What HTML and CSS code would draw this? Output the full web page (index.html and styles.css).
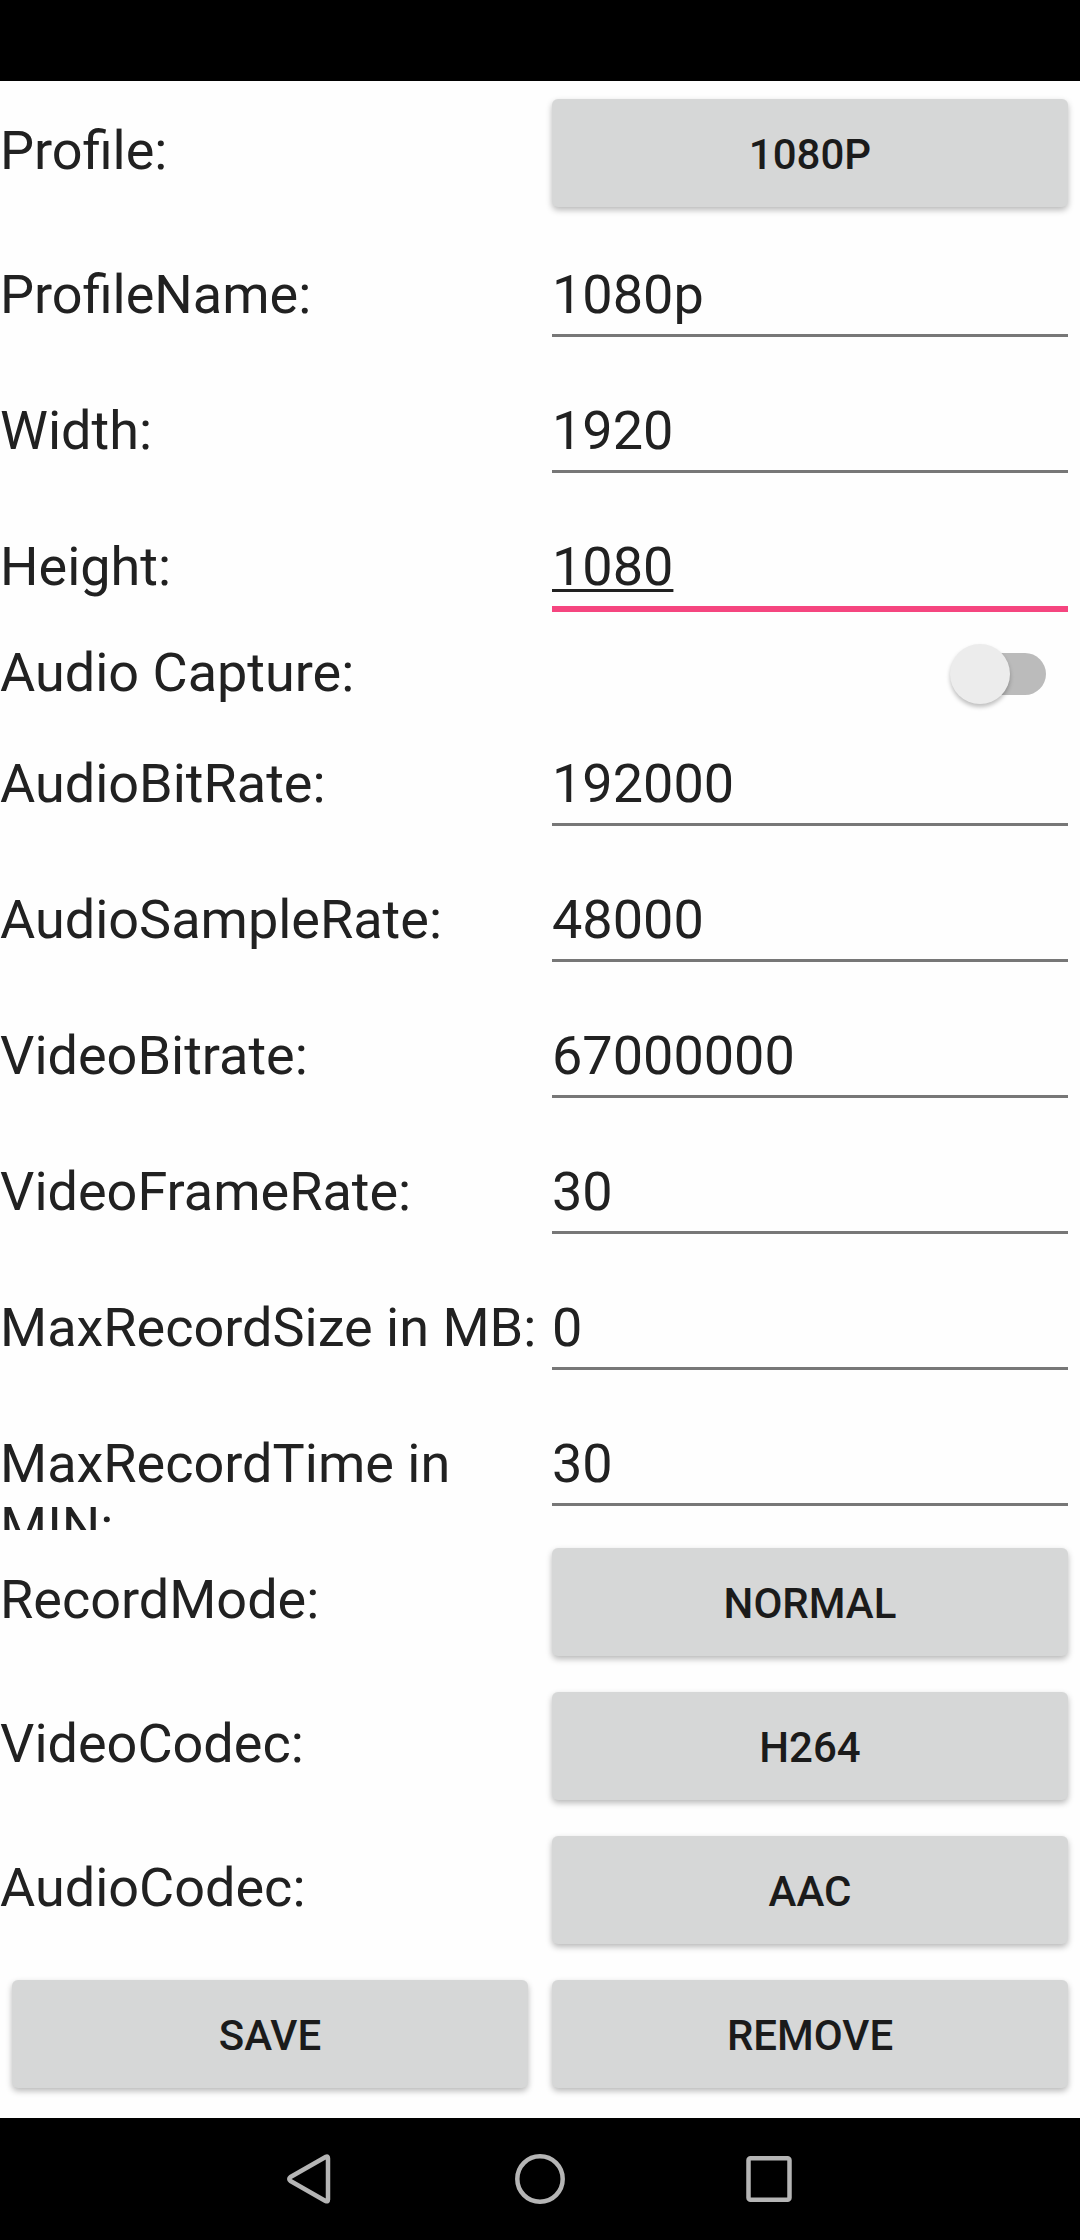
FILE: index.html
```html
<!DOCTYPE html>
<html lang="en">
<head>
<meta charset="utf-8">
<meta name="viewport" content="width=device-width, initial-scale=1">
<title>Recording profile</title>
<link rel="stylesheet" href="styles.css">
</head>
<body>
<div class="screen">
  <header class="status-bar"></header>
  <main class="content">
    <form class="form">
      <div class="row row-button">
        <label class="label" for="profile">Profile:</label>
        <button class="button" id="profile" type="button">1080P</button>
      </div>
      <div class="row">
        <label class="label" for="profile-name">ProfileName:</label>
        <input class="field" id="profile-name" type="text" value="1080p">
      </div>
      <div class="row">
        <label class="label" for="width">Width:</label>
        <input class="field" id="width" type="text" inputmode="numeric" value="1920">
      </div>
      <div class="row">
        <label class="label" for="height">Height:</label>
        <input class="field field-active" id="height" type="text" inputmode="numeric" value="1080">
      </div>
      <div class="row row-switch">
        <label class="label" for="audio-capture">Audio Capture:</label>
        <input class="switch" id="audio-capture" type="checkbox" role="switch">
      </div>
      <div class="row">
        <label class="label" for="audio-bit-rate">AudioBitRate:</label>
        <input class="field" id="audio-bit-rate" type="text" inputmode="numeric" value="192000">
      </div>
      <div class="row">
        <label class="label" for="audio-sample-rate">AudioSampleRate:</label>
        <input class="field" id="audio-sample-rate" type="text" inputmode="numeric" value="48000">
      </div>
      <div class="row">
        <label class="label" for="video-bitrate">VideoBitrate:</label>
        <input class="field" id="video-bitrate" type="text" inputmode="numeric" value="67000000">
      </div>
      <div class="row">
        <label class="label" for="video-frame-rate">VideoFrameRate:</label>
        <input class="field" id="video-frame-rate" type="text" inputmode="numeric" value="30">
      </div>
      <div class="row">
        <label class="label" for="max-size">MaxRecordSize in MB:</label>
        <input class="field" id="max-size" type="text" inputmode="numeric" value="0">
      </div>
      <div class="row">
        <label class="label" for="max-time">MaxRecordTime in MIN:</label>
        <input class="field" id="max-time" type="text" inputmode="numeric" value="30">
      </div>
      <div class="row row-button">
        <label class="label" for="record-mode">RecordMode:</label>
        <button class="button" id="record-mode" type="button">NORMAL</button>
      </div>
      <div class="row row-button">
        <label class="label" for="video-codec">VideoCodec:</label>
        <button class="button" id="video-codec" type="button">H264</button>
      </div>
      <div class="row row-button">
        <label class="label" for="audio-codec">AudioCodec:</label>
        <button class="button" id="audio-codec" type="button">AAC</button>
      </div>
      <div class="row row-button">
        <button class="button" type="button">SAVE</button>
        <button class="button" type="button">REMOVE</button>
      </div>
    </form>
  </main>
  <nav class="nav-bar" aria-label="System">
    <button class="nav-button" type="button" aria-label="Back">
      <svg class="nav-icon" viewBox="0 0 50 50"><path d="M41 2.8 Q43 1.800 43 4.500 V45.500 Q43 48.200 40.500 47 L5.500 27 Q3 25 5.500 23 Z"/></svg>
    </button>
    <button class="nav-button" type="button" aria-label="Home">
      <svg class="nav-icon" viewBox="0 0 50 50"><circle cx="25" cy="25" r="22.700"/></svg>
    </button>
    <button class="nav-button" type="button" aria-label="Recent apps">
      <svg class="nav-icon" viewBox="0 0 50 50"><rect x="3.500" y="4.300" width="41" height="41.500" rx="2"/></svg>
    </button>
  </nav>
</div>
</body>
</html>
```

FILE: styles.css
```css
* {
  box-sizing: border-box;
}

body {
  margin: 0;
  background: #fefefe;
  color: #212121;
  font-family: Roboto, "Liberation Sans", sans-serif;
  font-size: 54px;
  line-height: 63px;
}

.screen {
  display: flex;
  flex-direction: column;
  min-height: 100vh;
}

.status-bar {
  height: 81px;
  background: #000;
}

.content {
  flex: 1;
  padding-bottom: 12px;
}

.form {
  display: flex;
  flex-direction: column;
}

.row {
  display: grid;
  grid-template-columns: 1fr 1fr;
  align-items: start;
  height: 136px;
}

.row-button {
  height: 144px;
}

.row-switch {
  height: 81px;
  align-items: center;
}

/* Labels longer than the row are cut off at its lower edge. */
.label {
  height: 100%;
  padding-top: 38px;
  overflow: hidden;
}

.row-switch .label {
  padding-top: 8px;
}

.field {
  min-width: 0;
  height: 112px;
  margin: 0 12px;
  padding: 38px 0 8px;
  border: 0;
  border-bottom: 3px solid #777;
  border-radius: 0;
  outline: 0;
  background: transparent;
  color: inherit;
  font: inherit;
}

.field-active {
  height: 115px;
  border-bottom: 6px solid #f5457f;
  text-decoration: underline;
  text-decoration-thickness: 3px;
  text-underline-offset: 4px;
  text-decoration-skip-ink: none;
}

.button {
  height: 108px;
  margin: 18px 12px;
  padding: 2px 24px 0;
  border: 0;
  border-radius: 6px;
  background: #d6d7d7;
  box-shadow: 0 3px 6px rgba(0, 0, 0, 0.28);
  color: #1b1b1b;
  font: 500 42px/49px Roboto, "Liberation Sans", sans-serif;
}

.switch {
  appearance: none;
  justify-self: end;
  width: 84px;
  height: 42px;
  margin: 0 34px 0 0;
  border-radius: 21px;
  background: #bbb;
}

.switch::before {
  content: "";
  display: block;
  width: 60px;
  height: 60px;
  margin: -9px 0 0 -12px;
  border-radius: 50%;
  background: #ececec;
  box-shadow: 0 3px 4px rgba(0, 0, 0, 0.25);
}

.switch:checked::before {
  margin-left: 36px;
}

.nav-bar {
  display: flex;
  justify-content: center;
  align-items: center;
  gap: 180px;
  height: 122px;
  background: #000;
}

.nav-button {
  width: 50px;
  height: 50px;
  padding: 0;
  border: 0;
  background: transparent;
}

.nav-icon {
  display: block;
  width: 50px;
  height: 50px;
  fill: none;
  stroke: #b5b5b5;
  stroke-width: 4.500;
  stroke-linejoin: round;
}
```
